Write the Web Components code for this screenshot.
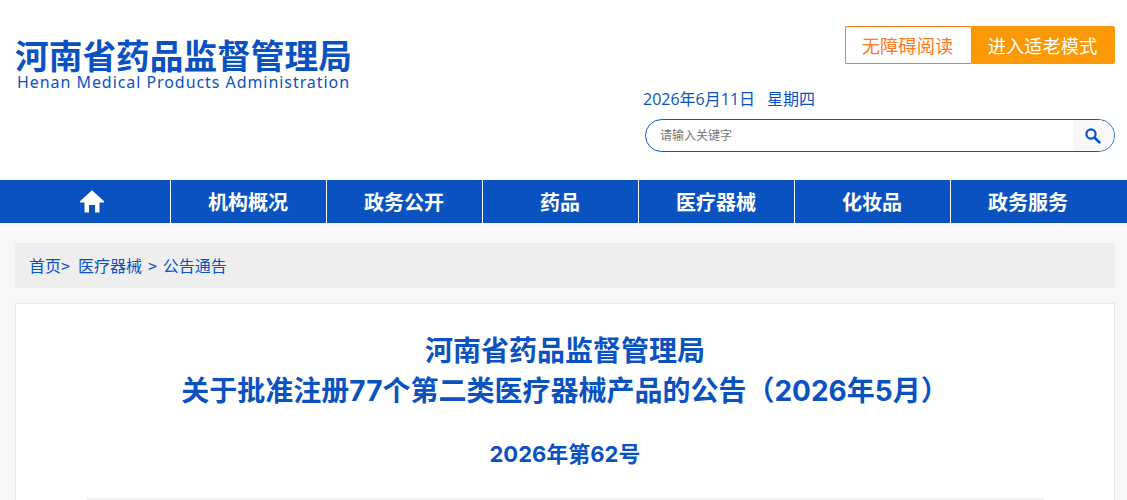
<!DOCTYPE html>
<html lang="zh-CN"><head><meta charset="utf-8"><title>河南省药品监督管理局</title>
<style>
html,body{margin:0;padding:0;height:500px;overflow:hidden;background:#f6f8f8;}
body{font-family:"Noto Sans CJK SC","Liberation Sans",sans-serif;color:#0b52c1;}
</style></head><body>
<site-header></site-header>
<site-nav>
<nav-item home></nav-item><nav-item>机构概况</nav-item><nav-item>政务公开</nav-item><nav-item>药品</nav-item><nav-item>医疗器械</nav-item><nav-item>化妆品</nav-item><nav-item>政务服务</nav-item>
</site-nav>
<bread-crumb></bread-crumb>
<article-card></article-card>
<script>
function def(name,html){customElements.define(name,class extends HTMLElement{constructor(){super();const r=this.attachShadow({mode:'open'});r.innerHTML=typeof html==='function'?html(this):html;}});}
def('site-header',`<style>
:host{display:flex;justify-content:space-between;height:180px;background:#fff;box-sizing:border-box;padding:0 12px 0 15px}
.logo{padding-top:34px;width:340px;color:#0b52c1}
.cn{font:700 33.7px/41px "Noto Sans CJK SC",sans-serif;white-space:nowrap}
.en{font:400 16px/15px "Noto Sans",sans-serif;letter-spacing:.94px;padding-left:2px;white-space:nowrap}
.right{width:472px;display:flex;flex-direction:column;align-items:stretch}
.btns{display:flex;justify-content:flex-end;margin-top:26px;height:38px}
.btns div{box-sizing:border-box;display:flex;align-items:center;justify-content:center;font:400 18.300px/1 "Noto Sans CJK SC",sans-serif;white-space:nowrap}
.a{width:126px;border:1px solid #ff7a1a;border-right:0;color:#ff7a1a;border-radius:2px 0 0 2px;padding-right:2px}
.b{width:144px;background:#fa9905;border:1px solid #fa9905;color:#fff;border-radius:0 2px 2px 0;padding-right:1px}
.date{margin:25px 0 0 0;font:400 16px/20px "Open Sans","Noto Sans CJK SC",sans-serif;color:#0b52c1;white-space:nowrap}
.date span{display:inline-block;width:124px}
.search{box-sizing:border-box;margin:10px 0 0 2px;height:33px;border:1px solid #0b52c1;border-radius:17px;display:flex;overflow:hidden;background:#fff}
.ph{flex:1;padding-left:14px;font:400 12px/29px "Noto Sans CJK SC",sans-serif;color:#757575}
.go{width:41px;background:#f7f8fa;display:flex;align-items:center;justify-content:center}
.go svg{margin:1px 1px 0 0}
</style>
<div class="logo"><div class="cn">河南省药品监督管理局</div><div class="en">Henan Medical Products Administration</div></div>
<div class="right"><div class="btns"><div class="a">无障碍阅读</div><div class="b">进入适老模式</div></div>
<div class="date"><span>2026年6月11日</span>星期四</div>
<div class="search"><div class="ph">请输入关键字</div><div class="go"><svg width="16" height="16" viewBox="0 0 16 16"><circle cx="6" cy="6" r="4.600" fill="none" stroke="#0b52c1" stroke-width="2.200"/><path d="M9.500 9.500l4.900 4.900" stroke="#0b52c1" stroke-width="2.600" stroke-linecap="round"/></svg></div></div></div>`);
def('site-nav',`<style>:host{display:flex;height:43px;background:#0b52c1;padding-left:14px}</style><slot></slot>`);
def('nav-item',el=>`<style>:host{box-sizing:border-box;width:156px;height:43px;display:flex;align-items:center;justify-content:center;color:#fff;font:700 20px/1 "Noto Sans CJK SC",sans-serif;border-left:1px solid #fff;padding-right:1px}
:host([home]){border-left:0;padding-right:0}</style>`+(el.hasAttribute('home')?`<svg width="24" height="23" viewBox="0 0 24 23"><path d="M12 .300L24 11.300V12.500H19.500V22.500H15V15H9V22.500H4.500V12.500H0V11.300Z" fill="#fff"/></svg>`:`<slot></slot>`));
def('bread-crumb',`<style>:host{display:flex;align-items:center;box-sizing:border-box;margin:20px 0 15px 15px;width:1100px;height:45px;background:#eee;padding:0 0 2px 14px;font:400 16px/1 "Noto Sans CJK SC",sans-serif;color:#0b52c1;white-space:pre}
.a{margin-left:8px}.b{margin-left:6px}.c{margin-left:6px}</style><span>首页&gt;</span><span class="a">医疗器械</span><span class="b">&gt;</span><span class="c">公告通告</span>`);
def('article-card',`<style>:host{display:block;box-sizing:border-box;margin-left:15px;width:1100px;height:197px;overflow:hidden;background:#fff;border:1px solid #e8e8e8;border-bottom:0;text-align:center;color:#0b52c1}
h1{margin:0;padding-top:27px;font:700 28px/40px "Inter","Noto Sans CJK SC",sans-serif}
h2{margin:0;padding-top:23px;font:700 22px/40px "Inter","Noto Sans CJK SC",sans-serif}
hr{border:0;height:2px;background:#f2f2f2;margin:24px 70px 0}
</style><h1>河南省药品监督管理局<br>关于批准注册77个第二类医疗器械产品的公告（2026年5月）</h1><h2>2026年第62号</h2><hr>`);
</script>
</body></html>
